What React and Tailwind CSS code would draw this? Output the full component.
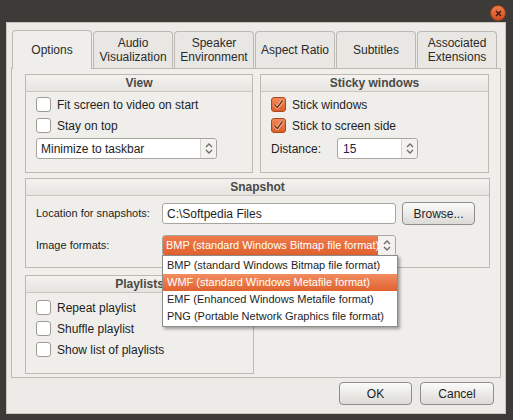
import React from 'react';

const TABS = [
  ['Options'],
  ['Audio', 'Visualization'],
  ['Speaker', 'Environment'],
  ['Aspect Ratio'],
  ['Subtitles'],
  ['Associated', 'Extensions'],
];

const FORMATS = [
  'BMP (standard Windows Bitmap file format)',
  'WMF (standard Windows Metafile format)',
  'EMF (Enhanced Windows Metafile format)',
  'PNG (Portable Network Graphics file format)',
];

function Spinner() {
  return (
    <svg width="8" height="11" viewBox="0 0 8 11" fill="none">
      <path d="M1 4l3-3 3 3" stroke="#6d6b67" strokeWidth="1.3" />
      <path d="M1 7l3 3 3-3" stroke="#6d6b67" strokeWidth="1.3" />
    </svg>
  );
}

function Check({ checked, label }) {
  return (
    <div className="flex items-center gap-[6px] h-[21px]">
      {checked ? (
        <span className="w-[15px] h-[15px] rounded-[3px] border border-[#a9491c] bg-gradient-to-b from-[#f08a5a] to-[#dc5f2a] flex items-center justify-center">
          <svg width="11" height="11" viewBox="0 0 11 11" fill="none">
            <path d="M1.5 5.5l2.8 3L9.5 1.5" stroke="#f7c9b0" strokeWidth="3" strokeLinejoin="round" />
            <path d="M1.5 5.5l2.8 3L9.5 1.5" stroke="#7a2c0c" strokeWidth="1.4" strokeLinejoin="round" />
          </svg>
        </span>
      ) : (
        <span className="w-[15px] h-[15px] rounded-[3px] border border-[#9e9b96] bg-white" />
      )}
      <span className="text-[12px] text-[#1e1e1e]">{label}</span>
    </div>
  );
}

function Group({ title, className, children }) {
  return (
    <div className={`border border-[#bcb9b3] flex flex-col ${className}`}>
      <div className="h-[17px] shrink-0 flex items-center justify-center border-b border-[#c9c6c0] bg-gradient-to-b from-[#f3f2ef] to-[#e6e4e0] text-[12px] font-bold text-[#4a4946]">
        {title}
      </div>
      {children}
    </div>
  );
}

function Button({ children, className }) {
  return (
    <div className={`h-[23px] rounded-[4px] border border-[#8f8d89] bg-gradient-to-b from-[#fbfbfa] to-[#dcdad6] flex items-center justify-center text-[12px] text-[#1e1e1e] ${className}`}>
      {children}
    </div>
  );
}

export default function App() {
  return (
    <div
      className="relative w-[513px] h-[420px] overflow-hidden bg-[#3c3b37] pt-[22px] pl-[6px]"
      style={{ fontFamily: '"Liberation Sans", Arial, sans-serif' }}
    >
      {/* close button */}
      <div className="absolute left-[490px] top-[5px] w-[16px] h-[16px] rounded-full bg-gradient-to-b from-[#f07a4a] to-[#d2501e] border border-[#9a3a14] flex items-center justify-center">
        <svg width="7" height="7" viewBox="0 0 7 7">
          <path d="M1 1l5 5M6 1l-5 5" stroke="#3a1a0c" strokeWidth="1.4" />
        </svg>
      </div>

      {/* window */}
      <div className="w-[500px] h-[392px] bg-[#edebe7] border border-[#c8c5bf] flex flex-col px-[4px]">
        {/* tab strip */}
        <div className="flex gap-[1px] pl-[1px] pt-[6px] h-[45px] items-end">
          {TABS.map((t, i) => (
            <div
              key={i}
              className={`w-[80px] rounded-t-[4px] border border-b-0 border-[#bcb9b3] flex flex-col items-center justify-center text-[12px] leading-[14px] text-[#2a2a2a] ${
                i === 0 ? 'h-[39px] bg-[#efeeeb] relative top-[1px]' : 'h-[37px] bg-[#e9e7e3]'
              }`}
            >
              {t.map((l) => (
                <span key={l}>{l}</span>
              ))}
            </div>
          ))}
        </div>

        {/* tab pane */}
        <div className="h-[310px] border border-[#bcb9b3] bg-[#efeeeb] pl-[13px] pr-[11px] pt-[5px] flex flex-col gap-[5px]">
          <div className="flex gap-[7px]">
            <Group title="View" className="w-[229px] h-[99px]">
              <div className="pl-[10px] pt-[2px] flex flex-col">
                <Check label="Fit screen to video on start" />
                <Check label="Stay on top" />
                <div className="mt-[2px] w-[181px] h-[21px] rounded-[3px] border border-[#a9a6a1] bg-white flex items-center">
                  <span className="flex-1 pl-[4px] text-[12px] text-[#1e1e1e]">Minimize to taskbar</span>
                  <span className="w-[16px] h-full border-l border-[#d6d4d0] bg-[#f3f2ef] flex items-center justify-center rounded-r-[3px]">
                    <Spinner />
                  </span>
                </div>
              </div>
            </Group>
            <Group title="Sticky windows" className="w-[230px] h-[99px]">
              <div className="pl-[10px] pt-[2px] flex flex-col">
                <Check checked label="Stick windows" />
                <Check checked label="Stick to screen side" />
                <div className="mt-[2px] flex items-center">
                  <span className="w-[66px] text-[12px] text-[#1e1e1e]">Distance:</span>
                  <div className="w-[81px] h-[21px] rounded-[3px] border border-[#a9a6a1] bg-white flex items-center">
                    <span className="flex-1 pl-[5px] text-[12px] text-[#2a1a4a]">15</span>
                    <span className="w-[16px] h-full border-l border-[#d6d4d0] bg-[#f3f2ef] flex items-center justify-center rounded-r-[3px]">
                      <Spinner />
                    </span>
                  </div>
                </div>
              </div>
            </Group>
          </div>

          <Group title="Snapshot" className="w-[465px] h-[90px]">
            <div className="pl-[10px] pt-[6px] flex flex-col gap-[10px]">
              <div className="flex items-center">
                <span className="w-[126px] text-[11px] text-[#1e1e1e]">Location for snapshots:</span>
                <div className="w-[234px] h-[21px] rounded-[3px] border border-[#a9a6a1] bg-white flex items-center pl-[4px] text-[12px] text-[#1e1e1e]">
                  C:\Softpedia Files
                </div>
                <Button className="ml-[6px] w-[73px]">Browse...</Button>
              </div>
              <div className="flex items-center">
                <span className="w-[126px] text-[11px] text-[#1e1e1e]">Image formats:</span>
                <div className="w-[234px] h-[21px] rounded-[3px] border border-[#a9a6a1] bg-white flex items-center overflow-hidden">
                  <div className="w-[215px] h-full bg-gradient-to-b from-[#ee7a4a] to-[#e0622e] flex items-center pl-[3px] text-[11px] text-white whitespace-nowrap overflow-hidden">
                    BMP (standard Windows Bitmap file format)
                  </div>
                  <span className="flex-1 h-full bg-[#f3f2ef] flex items-center justify-center">
                    <Spinner />
                  </span>
                </div>
              </div>
            </div>
          </Group>

          <Group title="Playlists" className="w-[229px] h-[99px] mt-[2px]">
            <div className="pl-[10px] pt-[4px] flex flex-col">
              <Check label="Repeat playlist" />
              <Check label="Shuffle playlist" />
              <Check label="Show list of playlists" />
            </div>
          </Group>
        </div>

        {/* buttons */}
        <div className="flex justify-end gap-[8px] pt-[4px] pr-[7px]">
          <Button className="w-[73px]">OK</Button>
          <Button className="w-[74px]">Cancel</Button>
        </div>
      </div>

      {/* dropdown list */}
      <div className="absolute left-[162px] top-[255px] w-[236px] py-[1px] bg-white border border-[#8e8c88] shadow-[2px_2px_3px_rgba(0,0,0,0.35)] flex flex-col">
        {FORMATS.map((f, i) => (
          <div
            key={f}
            className={`h-[17px] pl-[4px] flex items-center text-[11px] whitespace-nowrap ${
              i === 1 ? 'bg-gradient-to-b from-[#f28c60] to-[#e0622e] text-white' : 'text-[#1e1e1e]'
            }`}
          >
            {f}
          </div>
        ))}
      </div>
    </div>
  );
}
